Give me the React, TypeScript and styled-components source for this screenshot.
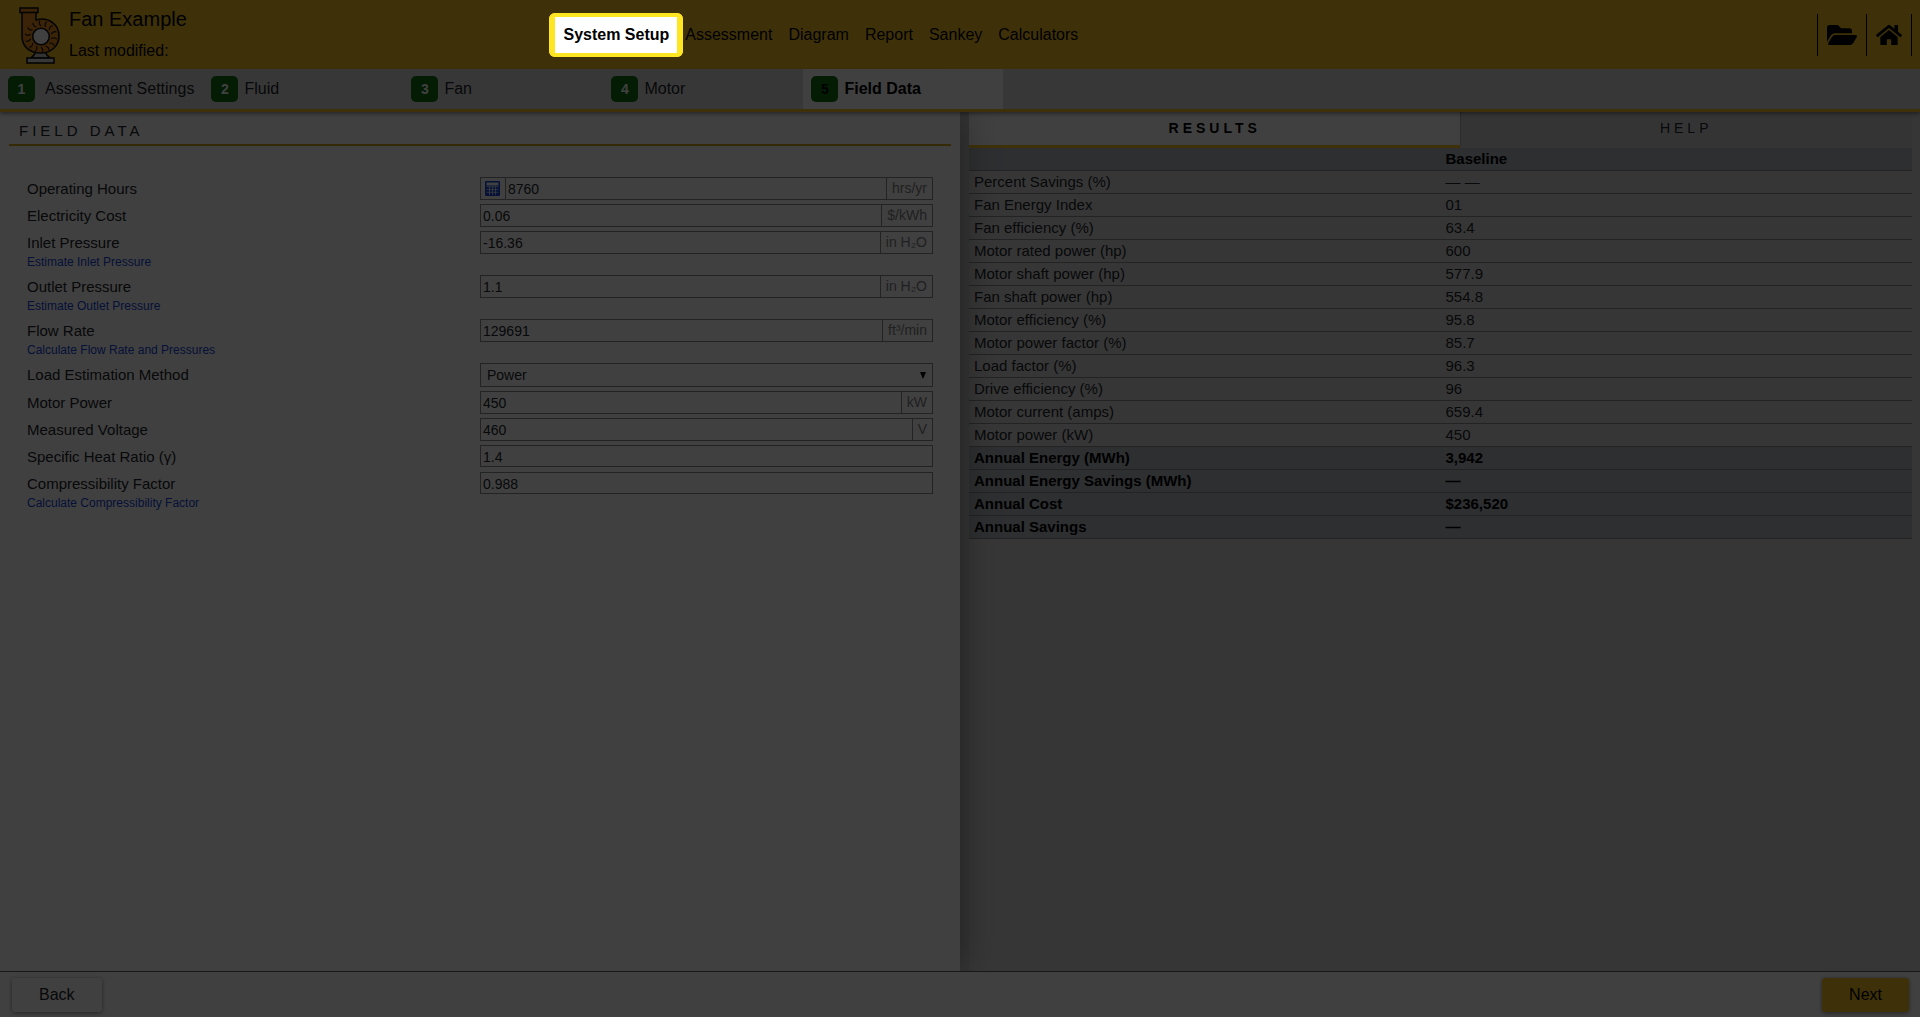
import React from "react";
import styled, { createGlobalStyle, css } from "styled-components";
import { FaFolderOpen, FaHome } from "react-icons/fa";

const colors = {
  brand: "#f8c428",
  brandDark: "#cda616",
  ink: "#000",
  text: "#212529",
  bar: "#dcdcdc",
  panel: "#d8d8d8",
  help: "#d0d0d0",
  tableHead: "#b4bac2",
  line: "#8c8c8c",
  link: "#1446dc",
  done: "#107010",
  casing: "#e88a1c",
  spotlight: "#fee623",
};

const GlobalStyle = createGlobalStyle`
  * { box-sizing: border-box; }
  body {
    margin: 0;
    font-family: "Liberation Sans", Arial, sans-serif;
    font-size: 15px;
    color: ${colors.text};
    background: #fff;
  }
  button, input, select { font-family: inherit; color: inherit; margin: 0; }
  button { border: 0; background: none; padding: 0; cursor: pointer; }
`;

const Page = styled.div`
  display: flex;
  flex-direction: column;
  height: 100vh;
`;

const Header = styled.header`
  display: flex;
  align-items: center;
  flex: none;
  height: 69px;
  padding-right: 8px;
  background: ${colors.brand};
  color: ${colors.ink};
`;

const Brand = styled.div`
  display: flex;
  align-items: center;
  width: 29%;
  padding-left: 19px;
  gap: 9px;
`;

const BrandText = styled.div`
  display: flex;
  flex-direction: column;
  gap: 9px;
`;

const Title = styled.h1`
  margin: 0;
  font-size: 20px;
  line-height: 24px;
  font-weight: 400;
`;

const Modified = styled.span`
  font-size: 16px;
  line-height: 22px;
`;

const Nav = styled.nav`
  display: flex;
  flex: 1;
  padding-left: 1px;
`;

const NavButton = styled.button<{ $active?: boolean }>`
  height: 36px;
  padding: 0 8px;
  font-size: 16px;
  color: ${colors.ink};
  ${({ $active }) =>
    $active &&
    css`
      position: relative;
      z-index: 10;
      font-weight: 700;
      background: #fff;
      &::before {
        content: "";
        position: absolute;
        inset: -4px -6px;
        border: solid ${colors.spotlight};
        border-width: 4px 6px;
        border-radius: 6px;
        box-shadow: 0 0 0 9999px rgba(0, 0, 0, 0.75);
        pointer-events: none;
      }
    `}
`;

const Tools = styled.div`
  display: flex;
  height: 42px;
  border-right: 1px solid ${colors.ink};
`;

const ToolButton = styled.button`
  display: flex;
  align-items: center;
  padding: 0 9px;
  border-left: 1px solid ${colors.ink};
  color: ${colors.ink};
`;

const Steps = styled.nav`
  display: flex;
  flex: none;
  height: 43px;
  background: ${colors.bar};
  border-bottom: 3px solid ${colors.brand};
  box-shadow: 0 2px 4px rgba(0, 0, 0, 0.4);
  position: relative;
  z-index: 3;
`;

const Step = styled.button<{ $active?: boolean }>`
  display: flex;
  align-items: center;
  gap: 6px;
  min-width: 200px;
  padding: 0 9px 0 8px;
  font-size: 16px;
  color: ${({ $active }) => ($active ? colors.ink : colors.text)};
  font-weight: ${({ $active }) => ($active ? 700 : 400)};
  background: ${({ $active }) => ($active ? "#fff" : "transparent")};
`;

const StepNumber = styled.span<{ $active?: boolean }>`
  width: 27px;
  height: 26px;
  line-height: 26px;
  border-radius: 5px;
  text-align: center;
  font-size: 14px;
  font-weight: 700;
  background: ${colors.done};
  color: ${({ $active }) => ($active ? colors.ink : "#fff")};
`;

const StepLabel = styled.span<{ $inset?: boolean }>`
  margin-left: ${({ $inset }) => ($inset ? "4px" : "0")};
  white-space: nowrap;
`;

const Body = styled.main`
  display: flex;
  flex: 1;
  min-height: 0;
  background: ${colors.panel};
`;

const FormPanel = styled.section`
  flex: none;
  width: 50%;
  position: relative;
  z-index: 2;
  background: #fff;
  box-shadow: 0 0 36px rgba(0, 0, 0, 0.4);
`;

const PanelTitle = styled.h2`
  margin: 0 9px;
  padding: 9px 10px 4px;
  font-size: 15px;
  line-height: 19px;
  font-weight: 400;
  letter-spacing: 4px;
  border-bottom: 2px solid ${colors.brandDark};
`;

const Form = styled.form`
  display: flex;
  flex-direction: column;
  gap: 4px;
  padding: 31px 27px;
`;

const FieldRow = styled.div`
  display: grid;
  grid-template-columns: 1fr 1fr;
  align-items: start;
`;

const Label = styled.label`
  line-height: 23px;
`;

const Control = styled.div<{ $height: number }>`
  display: flex;
  height: ${({ $height }) => $height}px;
  border: 1px solid ${colors.line};
  font-size: 14px;
`;

const Input = styled.input`
  flex: 1;
  min-width: 0;
  border: 0;
  padding: 1px 2px 0;
  font-size: 14px;
  background: none;
  outline: none;
`;

const Unit = styled.span`
  padding: 0 5px;
  line-height: 20px;
  border-left: 1px solid ${colors.line};
  color: #808080;
`;

const CalcButton = styled.button`
  display: flex;
  align-items: center;
  padding: 0 5px 0 4px;
  border-right: 1px solid ${colors.line};
  color: ${colors.link};
`;

const SelectBox = styled.div`
  display: grid;
  flex: 1;
  align-items: center;
  > * { grid-area: 1 / 1; }
`;

const Select = styled.select`
  appearance: none;
  height: 22px;
  padding: 0 6px;
  border: 0;
  font-size: 14px;
  background: none;
`;

const Arrow = styled.svg`
  justify-self: end;
  margin-right: 6px;
  pointer-events: none;
`;

const HelperLink = styled.a`
  grid-column: 1;
  font-size: 12px;
  line-height: 17px;
  color: ${colors.link};
  text-decoration: none;
`;

const Divider = styled.div`
  flex: none;
  width: 9px;
  background: #d0d0d0;
`;

const ResultsPanel = styled.aside`
  flex: 1;
  padding-right: 8px;
`;

const Tabs = styled.div`
  display: flex;
  height: 36px;
`;

const Tab = styled.button<{ $active?: boolean }>`
  flex: 1 1 auto;
  padding-bottom: 2px;
  font-size: 14px;
  letter-spacing: 4px;
  font-weight: ${({ $active }) => ($active ? 700 : 400)};
  color: ${({ $active }) => ($active ? colors.ink : colors.text)};
  background: ${({ $active }) => ($active ? "#fff" : colors.help)};
  border-bottom: 3px solid ${({ $active }) => ($active ? colors.brand : colors.help)};
  & + & { box-shadow: inset 1px 0 #aaa; }
`;

const Table = styled.table`
  width: 100%;
  table-layout: fixed;
  border-collapse: collapse;
  text-align: left;
`;

const Row = styled.tr<{ $strong?: boolean }>`
  border-bottom: 1px solid ${colors.line};
  ${({ $strong }) =>
    $strong &&
    css`
      background: ${colors.tableHead};
      color: ${colors.ink};
      font-weight: 700;
    `}
  th, td { height: 23px; padding: 0 5px; line-height: 22px; }
  th { font-weight: inherit; }
  thead & td, thead & th { height: 22px; }
`;

const Footer = styled.footer`
  display: flex;
  justify-content: space-between;
  flex: none;
  height: 46px;
  padding: 6px 11px 5px 12px;
  border-top: 1px solid #606060;
  background: #fff;
  position: relative;
  z-index: 3;
`;

const FooterButton = styled.button<{ $primary?: boolean }>`
  height: 34px;
  padding: 0 27px;
  font-size: 16px;
  border-radius: 3px;
  color: ${({ $primary }) => ($primary ? colors.ink : colors.text)};
  background: ${({ $primary }) => ($primary ? colors.brand : "#fff")};
  box-shadow: 0 1px 4px rgba(0, 0, 0, 0.45);
`;

const FanLogo = () => (
  <svg width="41" height="58" viewBox="0 0 41 58" stroke="#111" strokeWidth="1.600" aria-hidden="true">
    <path d="M12 52 Q16 49 17 45 H26 Q27 49 31 52 Z" fill="#ccc" />
    <path d="M3 6 H17 V14 C30 10 40 19 40 30 C40 40 32 47 22 47 C11 47 3 41 3 30 Z" fill={colors.casing} />
    <rect x="1" y="2" width="18" height="4.500" fill={colors.casing} />
    <rect x="8" y="52" width="27" height="5" fill="#ddd" />
    <g fill="none" strokeWidth="1.100">
      {Array.from({ length: 14 }, (_, i) => (
        <path key={i} d="M22 20 Q19 17 21 14.500" transform={`rotate(${(i * 360) / 14} 22 30.500)`} />
      ))}
    </g>
    <circle cx="22" cy="30.500" r="8.300" fill="#fff" />
  </svg>
);

const CalculatorIcon = () => (
  <svg width="15" height="15" viewBox="0 0 15 15" aria-hidden="true">
    <path
      fillRule="evenodd"
      fill="currentColor"
      d="M1 0H14Q15 0 15 1V14Q15 15 14 15H1Q0 15 0 14V1Q0 0 1 0ZM1.500 1.500V4.500H13.500V1.500Z"
    />
    <path
      stroke="#fff"
      strokeWidth="0.700"
      d="M1.500 5.800H13.500M1.500 8.600H13.500M1.500 11.300H13.500M4.500 5.500V14M7.500 5.500V14M10.500 5.500V14"
    />
  </svg>
);

const navItems = ["System Setup", "Assessment", "Diagram", "Report", "Sankey", "Calculators"];
const steps = ["Assessment Settings", "Fluid", "Fan", "Motor", "Field Data"];

type Field = { id: string; label: string; value: string; unit?: string; link?: string; kind?: "calc" | "select" };

const fields: Field[] = [
  { id: "hours", label: "Operating Hours", value: "8760", unit: "hrs/yr", kind: "calc" },
  { id: "cost", label: "Electricity Cost", value: "0.06", unit: "$/kWh" },
  { id: "inlet", label: "Inlet Pressure", value: "-16.36", unit: "in H₂O", link: "Estimate Inlet Pressure" },
  { id: "outlet", label: "Outlet Pressure", value: "1.1", unit: "in H₂O", link: "Estimate Outlet Pressure" },
  { id: "flow", label: "Flow Rate", value: "129691", unit: "ft³/min", link: "Calculate Flow Rate and Pressures" },
  { id: "method", label: "Load Estimation Method", value: "Power", kind: "select" },
  { id: "power", label: "Motor Power", value: "450", unit: "kW" },
  { id: "voltage", label: "Measured Voltage", value: "460", unit: "V" },
  { id: "ratio", label: "Specific Heat Ratio (γ)", value: "1.4" },
  { id: "factor", label: "Compressibility Factor", value: "0.988", link: "Calculate Compressibility Factor" },
];

const results: [string, string][] = [
  ["Percent Savings (%)", "— —"],
  ["Fan Energy Index", "01"],
  ["Fan efficiency (%)", "63.4"],
  ["Motor rated power (hp)", "600"],
  ["Motor shaft power (hp)", "577.9"],
  ["Fan shaft power (hp)", "554.8"],
  ["Motor efficiency (%)", "95.8"],
  ["Motor power factor (%)", "85.7"],
  ["Load factor (%)", "96.3"],
  ["Drive efficiency (%)", "96"],
  ["Motor current (amps)", "659.4"],
  ["Motor power (kW)", "450"],
];

const totals: [string, string][] = [
  ["Annual Energy (MWh)", "3,942"],
  ["Annual Energy Savings (MWh)", "—"],
  ["Annual Cost", "$236,520"],
  ["Annual Savings", "—"],
];

const controlHeight = (f: Field) => (f.kind === "select" ? 24 : f.unit ? 23 : 22);

const FormField = ({ field }: { field: Field }) => (
  <FieldRow>
    <Label htmlFor={field.id}>{field.label}</Label>
    <Control $height={controlHeight(field)}>
      {field.kind === "select" ? (
        <SelectBox>
          <Select id={field.id} defaultValue={field.value}>
            <option>Power</option>
            <option>Current</option>
          </Select>
          <Arrow width="6" height="7" viewBox="0 0 6 7" aria-hidden="true">
            <path d="M0 0H6L3 7Z" />
          </Arrow>
        </SelectBox>
      ) : (
        <>
          {field.kind === "calc" && (
            <CalcButton type="button" aria-label="Operating hours calculator">
              <CalculatorIcon />
            </CalcButton>
          )}
          <Input id={field.id} defaultValue={field.value} />
          {field.unit && <Unit>{field.unit}</Unit>}
        </>
      )}
    </Control>
    {field.link && <HelperLink href="#">{field.link}</HelperLink>}
  </FieldRow>
);

export default function App() {
  return (
    <Page>
      <GlobalStyle />
      <Header>
        <Brand>
          <FanLogo />
          <BrandText>
            <Title>Fan Example</Title>
            <Modified>Last modified:</Modified>
          </BrandText>
        </Brand>
        <Nav>
          {navItems.map((item, i) => (
            <NavButton key={item} $active={i === 0}>
              {item}
            </NavButton>
          ))}
        </Nav>
        <Tools>
          <ToolButton aria-label="Open folder">
            <FaFolderOpen size={30} />
          </ToolButton>
          <ToolButton aria-label="Home">
            <FaHome size={26} />
          </ToolButton>
        </Tools>
      </Header>
      <Steps>
        {steps.map((step, i) => (
          <Step key={step} $active={i === 4}>
            <StepNumber $active={i === 4}>{i + 1}</StepNumber>
            <StepLabel $inset={i === 0}>{step}</StepLabel>
          </Step>
        ))}
      </Steps>
      <Body>
        <FormPanel>
          <PanelTitle>FIELD DATA</PanelTitle>
          <Form>
            {fields.map((field) => (
              <FormField key={field.id} field={field} />
            ))}
          </Form>
        </FormPanel>
        <Divider />
        <ResultsPanel>
          <Tabs>
            <Tab $active>RESULTS</Tab>
            <Tab>HELP</Tab>
          </Tabs>
          <Table>
            <thead>
              <Row $strong>
                <td />
                <th scope="col">Baseline</th>
              </Row>
            </thead>
            <tbody>
              {results.map(([name, value]) => (
                <Row key={name}>
                  <th scope="row">{name}</th>
                  <td>{value}</td>
                </Row>
              ))}
              {totals.map(([name, value]) => (
                <Row key={name} $strong>
                  <th scope="row">{name}</th>
                  <td>{value}</td>
                </Row>
              ))}
            </tbody>
          </Table>
        </ResultsPanel>
      </Body>
      <Footer>
        <FooterButton>Back</FooterButton>
        <FooterButton $primary>Next</FooterButton>
      </Footer>
    </Page>
  );
}
